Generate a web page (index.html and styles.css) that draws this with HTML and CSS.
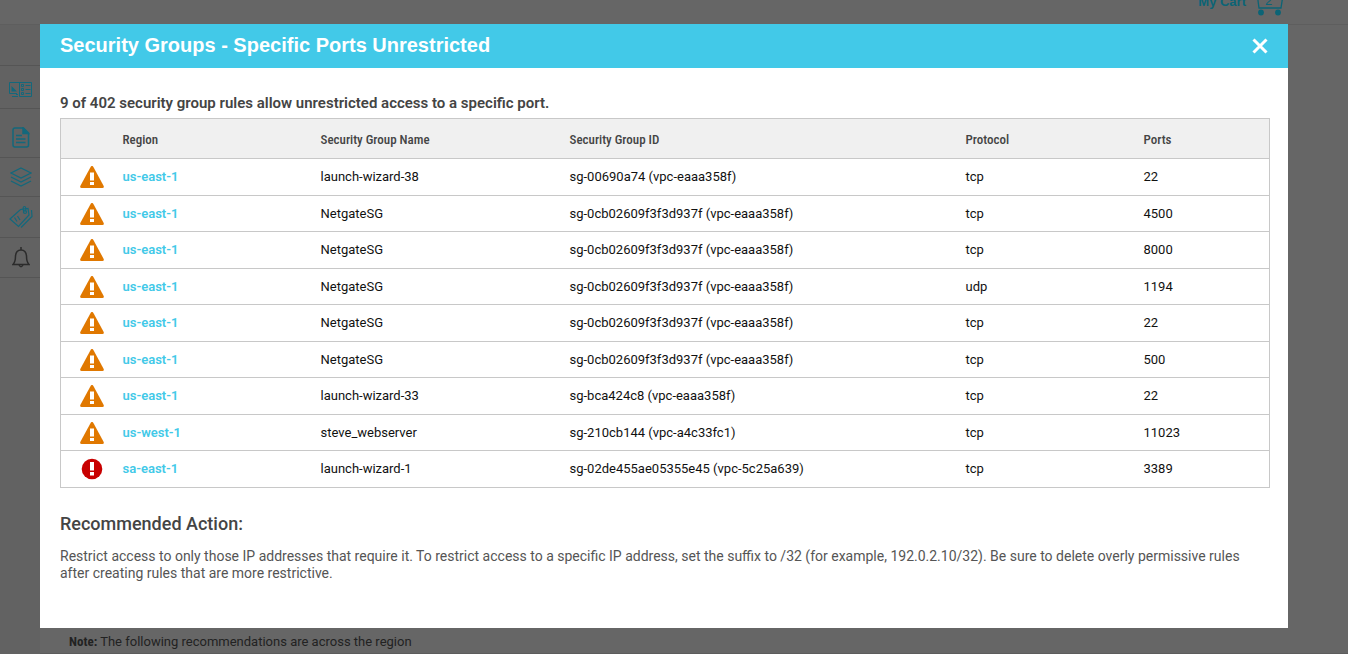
FILE: index.html
```html
<!DOCTYPE html>
<html lang="en">
<head>
<meta charset="utf-8">
<title>Security Groups - Specific Ports Unrestricted</title>
<link rel="stylesheet" href="styles.css">
</head>
<body>
<svg class="sprite" aria-hidden="true">
  <symbol id="warn" viewBox="0 0 24 22"><path d="M10.600.9Q12-1 13.400.9L23.700 20Q24.200 22 22.500 22H1.500Q-.2 22 .3 20Z" fill="#e07800"/><path d="M10 6.500h4v8h-4zM10 16h4V19h-4z" fill="#fff"/></symbol>
  <symbol id="alert" viewBox="0 0 24 22"><circle cx="12" cy="11" r="10.300" fill="#c80000"/><path d="M10 4h4v8.500h-4zM10 14h4V17.500h-4z" fill="#fff"/></symbol>
</svg>
<div class="page">
  <header class="topbar">
    <a class="cart" href="#">My Cart
      <svg class="cart-icon" width="30" height="30" viewBox="0 0 30 30"><path d="M1 6h2l2 15h22l2-13" fill="none" stroke="currentColor" stroke-width="1.300"/><circle cx="7" cy="25.500" r="2.900" fill="currentColor"/><circle cx="24" cy="25.500" r="2.900" fill="currentColor"/><text x="11" y="18" class="cart-count">2</text></svg>
    </a>
  </header>
  <div class="body">
    <nav class="side" aria-label="Main">
      <div class="side-head"></div>
      <a class="item i1" href="#" aria-label="Dashboard"><svg width="24" height="16" viewBox="0 0 24 16" fill="none" stroke="currentColor"><path d="M8 11.500H.5V.5H22.500V14.500H10.500V.5M3 14.500h6M7 12.500h2M12.500 2.500h2v2h-2zM12.500 6.500h2v2h-2zM12.500 10.500h2v2h-2zM16.500 3.500h5M16.500 7.500h5M16.500 11.500h5"/><path d="M2.500 4L8 9.500H2.500z" fill="currentColor" stroke="none"/></svg></a>
      <a class="item i2" href="#" aria-label="Reports"><svg width="18" height="21" viewBox="0 0 18 21" fill="none" stroke="currentColor" stroke-width="1.500"><path d="M3 1h8.500L16.500 6v12q0 2-2 2H3q-2 0-2-2V3q0-2 2-2zM4 8.500h6M4 12h9.500M4 15.500h9.500"/><path d="M11 1v5.500h5.500z" fill="currentColor"/></svg></a>
      <a class="item i3" href="#" aria-label="Layers"><svg width="22" height="20" viewBox="0 0 22 20" fill="none" stroke="currentColor" stroke-width="1.300"><path d="M11 1L21 6 11 11 1 6zM1 10l10 5 10-5M1 14l10 5 10-5"/></svg></a>
      <a class="item i4" href="#" aria-label="Tags"><svg width="24" height="24" viewBox="0 0 24 24" fill="none" stroke="currentColor" stroke-width="1.200"><path d="M1 14L11.500 4.500 19 3.500 20 10 9.500 21.500zM12 22.500L23 11.500 22.500 5M5.500 12.500l2.500 4M8.500 11l2.500 4"/><path d="M15 7.500q-2-6 .5-6 2 0 1 5"/><circle cx="16" cy="7" r="1.500"/></svg></a>
      <a class="item i5" href="#" aria-label="Alerts"><svg width="18" height="21" viewBox="0 0 18 21" fill="none" stroke="currentColor" stroke-width="1.500"><path d="M9 0v3M1 17.500Q3.500 15 3.500 9 4 3 9 3t5.500 6q0 6 2.500 8.500zM7 18q2 3.500 4 0"/></svg></a>
    </nav>
    <main class="content"><p class="note"><b>Note:</b> The following recommendations are across the region</p></main>
  </div>
</div>
<div class="overlay">
  <section class="modal" role="dialog" aria-modal="true" aria-labelledby="title">
    <header class="modal-head">
      <h1 id="title">Security Groups - Specific Ports Unrestricted</h1>
      <button class="close" type="button" aria-label="Close"><svg width="16" height="16" viewBox="0 0 16 16"><path d="M1.500 1.500l13 13M14.500 1.500l-13 13" stroke="#fff" stroke-width="3"/></svg></button>
    </header>
    <div class="modal-body">
      <h2 class="summary">9 of 402 security group rules allow unrestricted access to a specific port.</h2>
      <table class="rules">
        <colgroup><col class="c0"><col class="c1"><col class="c2"><col class="c3"><col class="c4"><col></colgroup>
        <thead><tr><td></td><th>Region</th><th>Security Group Name</th><th>Security Group ID</th><th>Protocol</th><th>Ports</th></tr></thead>
        <tbody>
          <tr><td><svg class="status"><use href="#warn"/></svg></td><td><a href="#">us-east-1</a></td><td>launch-wizard-38</td><td>sg-00690a74 (vpc-eaaa358f)</td><td>tcp</td><td>22</td></tr>
          <tr><td><svg class="status"><use href="#warn"/></svg></td><td><a href="#">us-east-1</a></td><td>NetgateSG</td><td>sg-0cb02609f3f3d937f (vpc-eaaa358f)</td><td>tcp</td><td>4500</td></tr>
          <tr><td><svg class="status"><use href="#warn"/></svg></td><td><a href="#">us-east-1</a></td><td>NetgateSG</td><td>sg-0cb02609f3f3d937f (vpc-eaaa358f)</td><td>tcp</td><td>8000</td></tr>
          <tr><td><svg class="status"><use href="#warn"/></svg></td><td><a href="#">us-east-1</a></td><td>NetgateSG</td><td>sg-0cb02609f3f3d937f (vpc-eaaa358f)</td><td>udp</td><td>1194</td></tr>
          <tr><td><svg class="status"><use href="#warn"/></svg></td><td><a href="#">us-east-1</a></td><td>NetgateSG</td><td>sg-0cb02609f3f3d937f (vpc-eaaa358f)</td><td>tcp</td><td>22</td></tr>
          <tr><td><svg class="status"><use href="#warn"/></svg></td><td><a href="#">us-east-1</a></td><td>NetgateSG</td><td>sg-0cb02609f3f3d937f (vpc-eaaa358f)</td><td>tcp</td><td>500</td></tr>
          <tr><td><svg class="status"><use href="#warn"/></svg></td><td><a href="#">us-east-1</a></td><td>launch-wizard-33</td><td>sg-bca424c8 (vpc-eaaa358f)</td><td>tcp</td><td>22</td></tr>
          <tr><td><svg class="status"><use href="#warn"/></svg></td><td><a href="#">us-west-1</a></td><td>steve_webserver</td><td>sg-210cb144 (vpc-a4c33fc1)</td><td>tcp</td><td>11023</td></tr>
          <tr><td><svg class="status"><use href="#alert"/></svg></td><td><a href="#">sa-east-1</a></td><td>launch-wizard-1</td><td>sg-02de455ae05355e45 (vpc-5c25a639)</td><td>tcp</td><td>3389</td></tr>
        </tbody>
      </table>
      <h2 class="action">Recommended Action:</h2>
      <p class="advice">Restrict access to only those IP addresses that require it. To restrict access to a specific IP address, set the suffix to /32 (for example, 192.0.2.10/32). Be sure to delete overly permissive rules after creating rules that are more restrictive.</p>
    </div>
  </section>
</div>
</body>
</html>
```
FILE: styles.css
```css
* { box-sizing: border-box; }
body { margin: 0; font-family: Roboto, "Liberation Sans", sans-serif; color: #444; }
h1, h2, p { margin: 0; }
.sprite { display: none; }
.page { display: flex; flex-direction: column; height: 100vh; overflow: hidden; background: #666; }
.topbar { display: flex; justify-content: flex-end; height: 25px; padding-right: 64px; border-bottom: 1px solid #5e5e5e; }
.cart { display: flex; align-items: center; gap: 8px; height: 4px; color: #0b6476; font: bold 13px/16px "Liberation Sans", sans-serif; text-decoration: none; white-space: nowrap; }
.cart-icon { flex: none; }
.cart-count { font: 13px "Liberation Sans", sans-serif; fill: currentColor; }
.body { display: flex; flex: 1; }
.side { width: 40px; background: #626262; }
.side-head { height: 41px; border-bottom: 1px solid #555; }
.item { display: flex; align-items: center; justify-content: center; padding-left: 1px; border-bottom: 1px solid #555; color: #13687c; }
.i1 { height: 43px; padding-top: 6px; padding-left: 2px; }
.i2 { height: 49px; padding-top: 8px; }
.i3 { height: 39px; }
.i4 { height: 41px; }
.i5 { height: 40px; padding-left: 2px; color: #2b2b2b; }
.content { display: flex; flex: 1; align-items: flex-end; padding: 0 29px 3px; border-bottom: 1px solid #5c5c5c; }
.note { font-size: 13px; line-height: 16px; color: #222; }
.note b { font-family: "Roboto Condensed", Roboto, sans-serif; }
.overlay { position: absolute; inset: 0; padding: 24px 60px 26px 40px; }
.modal { height: 100%; background: #fff; }
.modal-head { display: flex; align-items: center; justify-content: space-between; height: 44px; padding: 0 20px; background: #42c9e8; }
.modal-head h1 { padding-bottom: 2px; font: bold 20px/24px "Liberation Sans", sans-serif; color: #fff; }
.close { display: flex; padding: 0; border: 0; background: none; cursor: pointer; }
.modal-body { padding: 26px 18px 0 20px; }
.summary { font-size: 15px; line-height: 18px; font-weight: 600; }
.rules { width: 100%; margin-top: 6px; border: 1px solid #c8c8c8; border-collapse: collapse; table-layout: fixed; font-size: 13px; line-height: 16px; color: #111; }
.c0 { width: 62px; }
.c1 { width: 198px; }
.c2 { width: 249px; }
.c3 { width: 396px; }
.c4 { width: 178px; }
.rules tr { border-bottom: 1px solid #c8c8c8; }
.rules th, .rules td { padding: 0; text-align: left; vertical-align: middle; }
.rules thead tr { height: 40px; background: #f0f0f0; }
.rules tbody tr { height: 36px; }
.rules tbody tr:nth-child(odd) { height: 37px; }
.rules th { padding-top: 2px; font-family: "Roboto Condensed", Roboto, sans-serif; font-size: 13px; font-weight: 500; color: #444; }
.rules a { color: #42c9e8; font-weight: 600; text-decoration: none; }
.status { display: block; width: 24px; height: 22px; margin-left: 19px; }
.action { margin-top: 25px; font-size: 18px; line-height: 22px; font-weight: 500; }
.advice { margin-top: 13px; font-size: 14px; line-height: 17px; color: #555; }
```
